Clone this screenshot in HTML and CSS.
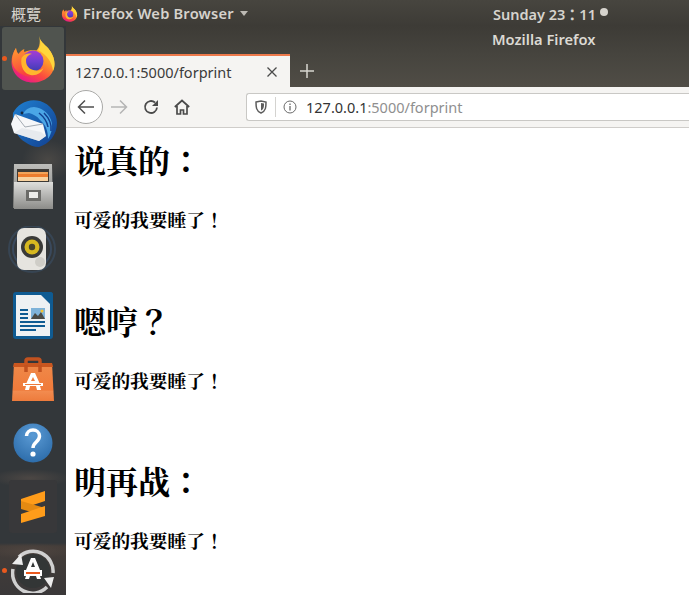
FILE: index.html
```html
<!DOCTYPE html>
<html lang="zh-TW">
<head>
<meta charset="utf-8">
<title>127.0.0.1:5000/forprint</title>
<link rel="stylesheet" href="styles.css">
</head>
<body>
<div class="desktop">
  <header class="topbar">
    <span class="activities">概覽</span>
    <span class="app">
      <svg class="app-icon" viewBox="0 0 48 48"><use href="#fx"/></svg>
      <span class="app-name">Firefox Web Browser</span>
      <span class="caret"></span>
    </span>
    <span class="clock">Sunday 23：11</span>
    <span class="clock-dot"></span>
  </header>
  <div class="main">
    <nav class="dock">
      <div class="dock-item active"><span class="run-dot"></span>
        <svg class="ico" width="48" height="48" viewBox="0 0 48 48">
          <defs>
            <linearGradient id="fxg" x1="0.85" y1="0.1" x2="0.35" y2="1"><stop offset="0" stop-color="#ffd338"/><stop offset=".4" stop-color="#ff9a2a"/><stop offset=".72" stop-color="#fb4a3f"/><stop offset="1" stop-color="#e81a86"/></linearGradient>
            <linearGradient id="fxl" x1="0" y1="0" x2="0.3" y2="1"><stop offset="0" stop-color="#ffa02e"/><stop offset="1" stop-color="#f9423f"/></linearGradient>
            <linearGradient id="fxp" x1="0.5" y1="0" x2="0.5" y2="1"><stop offset="0" stop-color="#a63ccf"/><stop offset=".5" stop-color="#6f3fd2"/><stop offset="1" stop-color="#3f3cb0"/></linearGradient>
            <g id="fx">
              <path fill="url(#fxg)" d="M30 1c1 5 5 8 9 12 4 5 6.500 10 6.500 16 0 10.500-9.500 18.500-21.500 18.500C12 47.500 2.500 39 2.500 27c0-5 1.500-10 4.500-14 .3 3 1.200 5 2.500 6 1.500-2.500 3.500-4 6-5-.6 1-.6 2 0 3 3-1.500 7-2.200 12-1.500 3.500-3.500 4-9.500 2.500-14.500z"/>
              <path fill="#ffd63c" d="M30 1c1 5 5 8 9 12 4 5 6.500 10 6.500 16 0 2.500-.5 5-1.500 7-1-9-6-16-15-21 3.500-3.500 3-9.500 1-14z"/>
              <path fill="url(#fxl)" d="M7 13c.3 3 1.200 5 2.500 6 3-1.500 6.500-2 9.500-.5-2.500.8-4.500 2.200-5.500 3.500 3 0 4.500 1 5 2.500-2 1-4 1-5 4 0 6 4 11 10 13-9 .5-19-5-20.500-15 0-5 1.500-10 4-13.500z"/>
              <circle cx="24" cy="26" r="10.500" fill="url(#fxp)"/>
              <path fill="#ffb52e" d="M12.500 23c2-3.500 6-5.500 10.500-4-3.500.5-6 3-6 7 0 6 5.500 10 11.500 9.500 2.500-.2 4.500-1 6-2.500-2 5-7 8-13 7-6-1-10.500-8-9-17z"/>
            </g>
          </defs>
          <use href="#fx"/>
        </svg>
      </div>
      <div class="dock-item">
        <svg class="ico tb" width="48" height="48" viewBox="0 0 48 48">
          <defs><linearGradient id="tbb" x1="0" y1="0" x2="1" y2="1"><stop offset="0" stop-color="#1f7fd0"/><stop offset="1" stop-color="#123f8f"/></linearGradient></defs>
          <path fill="url(#tbb)" d="M4 14C9 4 20-1 31 2c10 3 17 12 17 22 0 12-8 21-18 24-5 0-10-2-14-5-8-4-13-16-12-29z"/>
          <path fill="#4ba6e6" d="M25 8c8 1 14 5 17 13 2 6 1 13-3 19 0-8-2-14-8-19-3-4-7-6-11-7l-6 1c2-4 6-7 11-7z"/>
          <path fill="none" stroke="#123f8f" stroke-width="1.500" d="M35 14c5 5 8 11 7 18M30 14c5 4 8 8 9 14"/>
          <path fill="#f6f7f9" d="M6 15l28 10 3 12-7 5-25-8-3-9z"/>
          <path fill="#dfe3e8" d="M5 34l25 8 7-5-5-4-19-4z" opacity=".65"/>
          <path fill="none" stroke="#a4abb3" stroke-width="1" d="M6 15l10 13 18-3"/>
          <circle cx="13" cy="14" r="1.400" fill="#162a40"/>
        </svg>
      </div>
      <div class="dock-item">
        <svg class="ico" width="42" height="46" viewBox="0 0 42 46">
          <defs>
            <linearGradient id="cab" x1="0" y1="0" x2="0" y2="1"><stop offset="0" stop-color="#dededc"/><stop offset="1" stop-color="#8c8c89"/></linearGradient>
            <linearGradient id="cat" x1="0" y1="0" x2="0" y2="1"><stop offset="0" stop-color="#bdbdba"/><stop offset="1" stop-color="#7e7e7b"/></linearGradient>
          </defs>
          <path fill="url(#cat)" d="M2 0h38l1 44H1z"/>
          <path fill="#3d3a36" d="M5 5h32v14H5z"/>
          <path fill="#f2a45a" d="M6 8h30v2H6z"/>
          <path fill="#ec7c2e" d="M6 10h30v3H6z"/>
          <path fill="#f8d2a0" d="M6 13h30v4H6z"/>
          <path fill="url(#cab)" d="M2 18h39v27H2z"/>
          <path fill="#6b6b68" d="M14 26h15v11H14z"/>
          <path fill="#ececea" d="M17 28h9v6h-9z"/>
        </svg>
      </div>
      <div class="dock-item">
        <svg class="ico" width="50" height="50" viewBox="0 0 50 50">
          <circle cx="24" cy="23" r="23" fill="none" stroke="#3f5a7a" stroke-width="2" opacity=".4"/>
          <circle cx="24" cy="23" r="19" fill="none" stroke="#3f5a7a" stroke-width="2" opacity=".55"/>
          <rect x="9" y="2" width="29" height="42" rx="7" fill="#e6e4df"/>
          <circle cx="24" cy="21" r="11" fill="#3a3a38"/>
          <circle cx="24" cy="21" r="7.500" fill="#d7b820"/>
          <circle cx="24" cy="21" r="3.200" fill="#48442c"/>
          <circle cx="32" cy="36" r="5" fill="#cfcdc7"/>
        </svg>
      </div>
      <div class="dock-item">
        <svg class="ico" width="40" height="48" viewBox="0 0 40 48">
          <rect x="0" y="1" width="40" height="47" rx="3" fill="#0f5b92"/>
          <path fill="#eef1f3" d="M3 4h25l9 9v32H3z"/>
          <path fill="#0f5b92" d="M28 1h9a3 3 0 0 1 3 3v9z"/>
          <path fill="#0f5b92" d="M7 18h8v2H7zm0 4h8v2H7zm0 4h8v2H7zm0 4h25v2H7zm0 4h25v2H7zm0 4h16v2H7z"/>
          <rect x="18" y="17" width="14" height="11" fill="#7fb3d9"/>
          <path fill="#4a4a44" d="M18 28l4-6 3 3 3-4 4 7z"/>
          <circle cx="29" cy="20" r="1.500" fill="#f2c230"/>
        </svg>
      </div>
      <div class="dock-item">
        <svg class="ico" width="42" height="44" viewBox="0 0 42 44">
          <defs><linearGradient id="bag" x1="0" y1="0" x2="0" y2="1"><stop offset="0" stop-color="#ef8a4a"/><stop offset=".72" stop-color="#f07a3a"/><stop offset=".73" stop-color="#f28c50"/><stop offset="1" stop-color="#ed7b3c"/></linearGradient></defs>
          <path fill="none" stroke="#c2521f" stroke-width="3.500" d="M14 14V4a2 2 0 0 1 2-2h10a2 2 0 0 1 2 2v10"/>
          <path fill="url(#bag)" d="M2 6h38l2 38H0z"/>
          <path fill="#c9561f" d="M2 6h38l1 4H1z"/>
          <path fill="none" stroke="#c2521f" stroke-width="3.500" d="M14 8v7M28 8v7"/>
          <path fill="#fff" fill-rule="evenodd" d="M19 16h4l4.500 10h-13zM21 20l-2 4h4z"/>
          <path fill="#fff" d="M11 26h20v3H11zM14 29h4l-1 4h-4zM24 29h4l1 4h-4z"/>
          <path fill="#ed7b3c" d="M13 27h16v1H13z"/>
        </svg>
      </div>
      <div class="dock-item">
        <svg class="ico" width="40" height="40" viewBox="0 0 40 40">
          <defs><radialGradient id="hlp" cx=".5" cy=".3" r=".75"><stop offset="0" stop-color="#5b9bd5"/><stop offset="1" stop-color="#2a6aa8"/></radialGradient></defs>
          <circle cx="20" cy="20" r="19.500" fill="url(#hlp)"/>
          <path fill="none" stroke="#fff" stroke-width="3.500" d="M13.500 13c0-3.500 3-6 6.500-6s6.500 2.500 6.500 6c0 6-6.500 6-6.500 12"/>
          <circle cx="20" cy="31" r="2.600" fill="#fff"/>
        </svg>
      </div>
      <div class="dock-item">
        <div class="sublime">
          <svg width="24" height="32" viewBox="0 0 24 32">
            <path fill="#ff9c1a" d="M24 0v10L0 18V8z"/>
            <path fill="#e58a12" d="M0 10l24 7v8L0 18z"/>
            <path fill="#ff9c1a" d="M24 15v10L0 32V23z"/>
          </svg>
        </div>
      </div>
      <div class="dock-item"><span class="run-dot"></span>
        <svg class="ico" width="44" height="44" viewBox="0 0 44 44">
          <circle cx="22" cy="22" r="17" fill="#333636"/>
          <path fill="none" stroke="#d0d0d0" stroke-width="3.500" d="M8 8A20 20 0 0 1 42 24M36 38A20 20 0 0 1 2 20"/>
          <path fill="#ececec" d="M10 5L1 15l11 1zM33 29l10-1-3 11z"/>
          <path fill="#fff" fill-rule="evenodd" d="M20 9h4l5 12H15zM22 13l-2 5h4z"/>
          <path fill="#fff" d="M13 21h18v6H13zM15 27h4l-1 3h-4zM25 27h4l1 3h-4z"/>
          <path fill="#e9591e" d="M15 23h14v2H15z"/>
        </svg>
      </div>
    </nav>
    <div class="window">
      <div class="titlebar">Mozilla Firefox</div>
      <div class="tabstrip">
        <div class="tab">
          <span class="tab-title">127.0.0.1:5000/forprint</span>
          <svg class="tab-close" width="12" height="12" viewBox="0 0 12 12"><path d="M1.500 1.500l9 9m0-9l-9 9" stroke="#4a4a4a" stroke-width="1.300" fill="none"/></svg>
        </div>
        <svg class="new-tab" width="14" height="14" viewBox="0 0 14 14"><path d="M7 0v14M0 7h14" stroke="#d8d6d0" stroke-width="1.500"/></svg>
      </div>
      <div class="toolbar">
        <button class="back" aria-label="Back"><svg width="18" height="16" viewBox="0 0 18 16"><path d="M17 8H2m6-6.500L1.500 8 8 14.500" fill="none" stroke="#4f4f4f" stroke-width="1.500"/></svg></button>
        <svg class="forward" width="18" height="16" viewBox="0 0 18 16"><path d="M1 8h15M10 1.500L16.500 8 10 14.500" fill="none" stroke="#b5b5b5" stroke-width="1.500"/></svg>
        <svg class="reload" width="16" height="16" viewBox="0 0 16 16"><path d="M14 8.500A6 6 0 1 1 12 3.500" fill="none" stroke="#4a4a4a" stroke-width="1.800"/><path d="M15 1v6H9z" fill="#4a4a4a"/></svg>
        <svg class="home" width="16" height="16" viewBox="0 0 16 16"><path d="M.8 8L8 1.500 15.200 8M3 7v8h3.500v-4h3v4H13V7" fill="none" stroke="#4a4a4a" stroke-width="1.700"/></svg>
        <div class="urlbar">
          <svg class="shield" width="12" height="14" viewBox="0 0 12 14"><path d="M1 2l5-1 5 1c0 5 0 9-5 11C1 11 1 7 1 2z" fill="none" stroke="#5c5c5c" stroke-width="1.500"/><path d="M6 3l3 .6c0 3 0 5.500-3 7z" fill="#5c5c5c"/></svg>
          <span class="url-sep"></span>
          <svg class="info" width="14" height="14" viewBox="0 0 14 14"><circle cx="7" cy="7" r="6" fill="none" stroke="#6a6a6a" stroke-width="1"/><path d="M7 6v4.500M7 3.500v1.500" stroke="#6a6a6a" stroke-width="1.300"/></svg>
          <span class="url"><span class="host">127.0.0.1</span>:5000/forprint</span>
        </div>
      </div>
      <main class="content">
        <section class="note">
          <h1>说真的：</h1>
          <h3>可爱的我要睡了！</h3>
        </section>
        <section class="note">
          <h1>嗯哼？</h1>
          <h3>可爱的我要睡了！</h3>
        </section>
        <section class="note">
          <h1>明再战：</h1>
          <h3>可爱的我要睡了！</h3>
        </section>
      </main>
    </div>
  </div>
</div>
</body>
</html>
```
FILE: styles.css
```css
html, body {
  margin: 0;
  padding: 0;
  height: 100%;
  overflow: hidden;
  background: #fff;
}
.desktop {
  display: flex;
  flex-direction: column;
  width: 689px;
  height: 595px;
  overflow: hidden;
  font-family: "Noto Sans", "Liberation Sans", sans-serif;
}
.topbar {
  position: relative;
  z-index: 2;
  flex: 0 0 26px;
  display: flex;
  align-items: center;
  background: linear-gradient(#47453f, #3d3b36);
  color: #d6d3cd;
  font-size: 14.670px;
  font-weight: 600;
}
.activities {
  margin-left: 11px;
  width: 50px;
  font-family: "Noto Sans CJK TC", sans-serif;
  font-weight: 400;
  font-size: 15px;
}
.app {
  display: flex;
  align-items: center;
  width: 432px;
}
.app-icon {
  width: 17px;
  height: 17px;
  margin-right: 5px;
}
.app-name {
  letter-spacing: .2px;
}
.caret {
  margin-left: 6px;
  border-left: 4.500px solid transparent;
  border-right: 4.500px solid transparent;
  border-top: 5px solid #bdbab4;
}
.clock {
  width: 107px;
  font-size: 14.500px;
}
.clock-dot {
  width: 8px;
  height: 8px;
  border-radius: 50%;
  background: #d6d3cd;
  margin-bottom: 2px;
}
.main {
  flex: 1;
  display: flex;
  min-height: 0;
}
.dock {
  flex: 0 0 66px;
  display: flex;
  flex-direction: column;
  align-items: center;
  background:
    radial-gradient(ellipse 44px 8px at 30px 525px, #4f4540, transparent),
    linear-gradient(transparent 517px, #443d39 520px, #3a3839 569px),
    radial-gradient(ellipse 40px 9px at 30px 452px, #4c4744, transparent),
    radial-gradient(ellipse 26px 20px at 48px 134px, #4a4845, transparent),
    #33373a;
}
.dock-item {
  position: relative;
  flex: 0 0 63px;
  width: 62px;
  margin-top: 1px;
  display: flex;
  align-items: center;
  justify-content: center;
  border-radius: 3px;
}
.dock-item.active {
  background: #50544f;
}
.run-dot {
  position: absolute;
  left: 0;
  top: 50%;
  width: 5px;
  height: 5px;
  margin-top: -3px;
  border-radius: 50%;
  background: #e9591e;
}
.sublime {
  width: 48px;
  height: 53px;
  display: flex;
  align-items: center;
  justify-content: center;
  background: #38383a;
  border-radius: 3px;
}
.window {
  flex: 1;
  min-width: 0;
  display: flex;
  flex-direction: column;
}
.titlebar {
  flex: 0 0 28px;
  box-sizing: border-box;
  padding: 3px 0 0 426px;
  background: linear-gradient(#3d3b36, #46443e);
  color: #dcd9d3;
  font-size: 14.670px;
  font-weight: 600;
}
.tabstrip {
  flex: 0 0 33px;
  display: flex;
  align-items: center;
  background: linear-gradient(#46443e, #504d46);
}
.tab {
  box-sizing: border-box;
  align-self: stretch;
  width: 224px;
  display: flex;
  align-items: center;
  justify-content: space-between;
  padding: 0 12px 0 9px;
  background: #f5f4f2;
  border-top: 2px solid #ee7a4c;
  color: #3b3b3b;
  font-size: 14.500px;
}
.new-tab {
  margin-left: 10px;
}
.toolbar {
  flex: 0 0 41px;
  box-sizing: border-box;
  display: flex;
  align-items: center;
  background: #f5f4f2;
  border-bottom: 1px solid #cfcdca;
}
.back {
  width: 34px;
  height: 34px;
  margin-left: 3px;
  padding: 0;
  display: flex;
  align-items: center;
  justify-content: center;
  background: #fff;
  border: 1px solid #a9a9a7;
  border-radius: 50%;
}
.forward {
  margin-left: 7px;
}
.reload {
  margin-left: 15px;
}
.home {
  margin-left: 15px;
}
.urlbar {
  flex: 1;
  height: 28px;
  margin-left: 56px;
  display: flex;
  align-items: center;
  box-sizing: border-box;
  background: #fff;
  border: 1px solid #c9c8c5;
  border-right: 0;
  border-radius: 3px 0 0 3px;
}
.shield {
  margin-left: 8px;
}
.url-sep {
  width: 1px;
  height: 20px;
  margin-left: 8px;
  background: #d4d3d0;
}
.info {
  margin-left: 7px;
}
.url {
  margin-left: 9px;
  font-size: 14.500px;
  color: #8f8f8f;
}
.host {
  color: #333;
}
.content {
  flex: 1;
  padding: 8px 8px 0 8px;
  background: #fff;
  color: #000;
  font-family: "Noto Serif CJK TC", "Liberation Serif", "Noto Sans CJK TC", serif;
  text-spacing-trim: space-all;
}
.note {
  height: 160.500px;
}
.content h1 {
  margin: 0;
  font-size: 32px;
}
.content h3 {
  margin: 23px 0 0;
  font-size: 18.720px;
}
```
